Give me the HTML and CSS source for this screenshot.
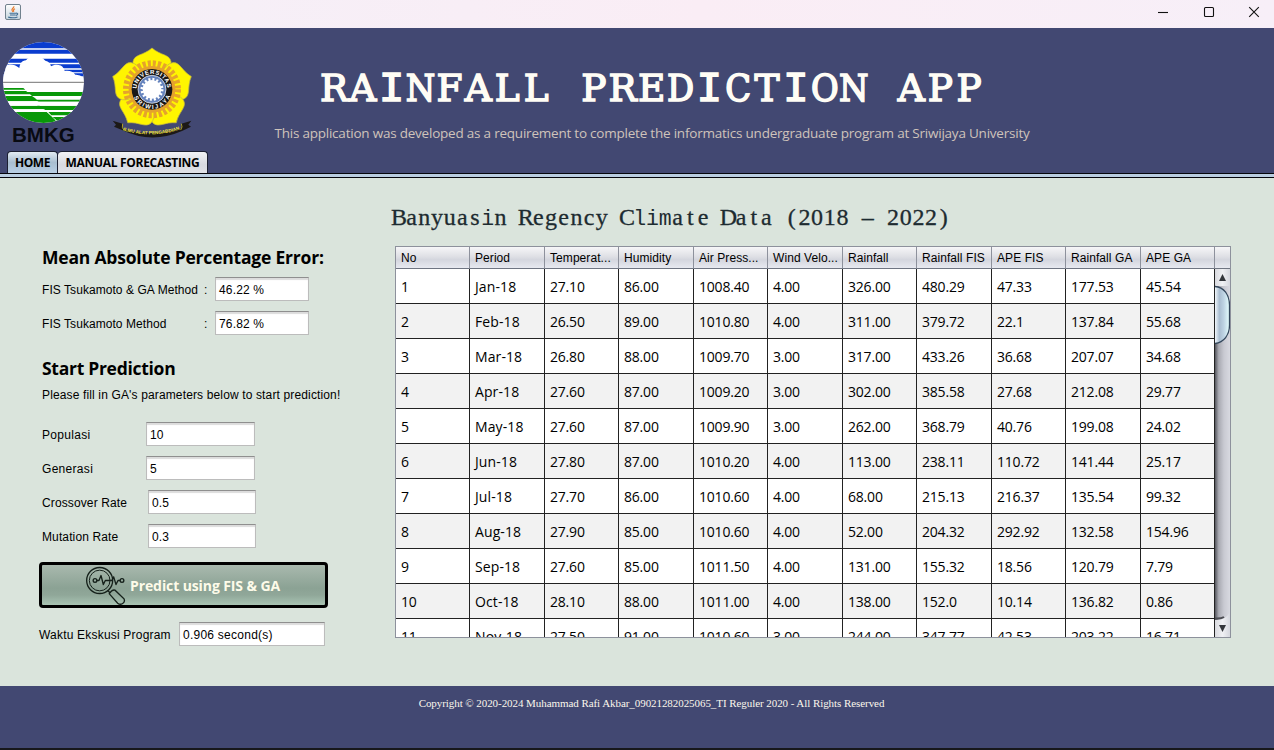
FILE: index.html
```html
<!DOCTYPE html>
<html lang="en">
<head>
<meta charset="utf-8">
<title>Rainfall Prediction App</title>
<link rel="stylesheet" href="styles.css">
</head>
<body>
<div class="window">
  <div class="titlebar">
    <svg class="java" viewBox="0 0 16 16">
      <defs><linearGradient id="jv" x1="0" y1="0" x2="0" y2="1"><stop offset="0" stop-color="#fff"/><stop offset="1" stop-color="#c3d3dd"/></linearGradient></defs>
      <rect x=".5" y=".5" width="15" height="15" rx="1.5" fill="url(#jv)" stroke="#71818e"/>
      <path d="M8.8 2.3c.6 1.7-2.800 2.300-1.700 4.200l1 1.500M10 4.800C8.200 5.600 8.200 6.300 8.900 7.600" fill="none" stroke="#e8792b" stroke-width="1.200"/>
      <path d="M4.500 9.200h6.500M5 11h5.500M3.200 13.100c3 .9 7 .7 9.300-.2M11 9.200c2.500-.3 2.200 1.800-.2 2.200" fill="none" stroke="#3f6d93" stroke-width="1.100"/>
    </svg>
    <div class="controls">
      <svg viewBox="0 0 12 12"><path d="M1 6.500h10" /></svg>
      <svg viewBox="0 0 12 12"><rect x="1.500" y="1.500" width="9" height="9" rx="1"/></svg>
      <svg viewBox="0 0 12 12"><path d="M1.200 1.200l9.600 9.600M10.800 1.200L1.200 10.800"/></svg>
    </div>
  </div>

  <header class="header">
    <svg class="logos" viewBox="0 84 660 366">
      <defs>
        <clipPath id="globe"><circle cx="130.500" cy="247.500" r="121.500"/></clipPath>
        <path id="petal" d="M456 268C425 235 395 207 399 185C403 162 430 167 456 144C482 167 509 162 513 185C517 207 487 235 456 268Z"/>
        <path id="arcTop" d="M410 268a46 46 0 0 1 92 0"/>
        <path id="arcBottom" d="M397 268a59 59 0 0 0 118 0"/>
        <path id="ribbonArc" d="M366 390Q456 418 546 386"/>
      </defs>
      <g clip-path="url(#globe)">
        <rect x="8" y="125" width="246" height="246" fill="#fff"/>
        <path d="M0 125h260v20H0zM0 149h260v12H0zM0 176h260v12H0zM0 193h260v12H0zM0 209h260v8H0zM0 220h260v9H0z" fill="#0a3ccf"/>
        <path d="M0 206c8-8 16-12 26-12c12-1 22 2 32 10c2-14 8-22 20-23c12-16 44-17 58 1c10 2 15 8 17 17c10-8 32-6 37 5q4 3 4 9c12-3 26 2 32 11q14-1 24 9v12H0z" fill="#fff"/>
        <path d="M0 247h260" stroke="#8e8e8e" stroke-width="4"/>
        <path d="M0 264h70l6 5H0zM0 273h78l14 10H0zM0 288h96l12 8H106l14 8H0zM0 317h124l12 11H0zM0 336h140l22 20l12 15H0zM82 276h178v12H96zM104 299h156v6H116zM112 317h148v5H120zM124 321h136v9H132zM145 336h115v10H154zM158 351h102v20h-78z" fill="#089808"/>
        <path d="M0 304h112v13H0zM108 305h152v12H120zM0 328h134v8H0zM140 330h120v6H147z" fill="#fff"/>
      </g>
      <text x="36" y="425" textLength="188" lengthAdjust="spacingAndGlyphs" class="bmkg">BMKG</text>
      <g fill="#fff500" stroke="#c3b640" stroke-width="2">
        <use href="#petal"/><use href="#petal" transform="rotate(72 456 268)"/><use href="#petal" transform="rotate(144 456 268)"/><use href="#petal" transform="rotate(216 456 268)"/><use href="#petal" transform="rotate(288 456 268)"/>
      </g>
      <circle cx="456" cy="268" r="70" fill="#e5a32c"/>
      <circle cx="456" cy="268" r="75" fill="none" stroke="#e5a32c" stroke-width="24" stroke-dasharray="9 5.727"/>
      <circle cx="456" cy="268" r="61" fill="#191717"/>
      <circle cx="456" cy="268" r="42" fill="#6583bd" stroke="#fff" stroke-width="2"/>
      <circle cx="456" cy="268" r="28" fill="#fff"/>
      <circle cx="456" cy="268" r="30" fill="none" stroke="#fff" stroke-width="9" stroke-dasharray="6 5.800"/>
      <text class="seal"><textPath href="#arcTop" startOffset="2" textLength="138">UNIVERSITAS</textPath></text>
      <text class="seal"><textPath href="#arcBottom" startOffset="24" textLength="140">SRIWIJAYA</textPath></text>
      <path d="M338 362l30 9v15q88 28 176-1v-14l30-9-9 12 8 6-27 13q-92 40-180-3l-24-10 6-6z" fill="#1c1917"/>
      <path d="M368 371q-4 12 4 20M544 371q5 10-2 19" fill="none" stroke="#f3df24" stroke-width="2"/>
      <text class="ribbon"><textPath href="#ribbonArc" startOffset="4" textLength="172">ILMU ALAT PENGABDIAN</textPath></text>
    </svg>
    <div class="heading">
      <svg class="title" viewBox="0 0 668 44"><text y="34.500" x="16 44.900 73.700 102.600 131.500 160.400 189.200 218.100 247 275.800 304.700 333.600 362.400 391.300 420.200 449.100 477.900 506.800 535.700 564.500 593.400 622.300 651.100">RA<tspan class="slab">I</tspan><tspan class="tight">N</tspan>FALL PRE<tspan class="tight">D</tspan><tspan class="slab">I</tspan><tspan class="tight">C</tspan>T<tspan class="slab">I</tspan><tspan class="tight">ON</tspan> APP</text></svg>
      <p class="subtitle">This application was developed as a requirement to complete the informatics undergraduate program at Sriwijaya University</p>
    </div>
    <nav class="tabs">
      <a class="tab active"><span>HOME</span></a>
      <a class="tab"><span>MANUAL FORECASTING</span></a>
    </nav>
  </header>
  <div class="tabline"></div>

  <main class="main">
    <section class="side">
      <h2>Mean Absolute Percentage Error:</h2>
      <div class="row mape"><label>FIS Tsukamoto &amp; GA Method</label><span>:</span><div class="field">46.22 %</div></div>
      <div class="row mape"><label>FIS Tsukamoto Method</label><span>:</span><div class="field">76.82 %</div></div>
      <h2 class="start">Start Prediction</h2>
      <p class="hint">Please fill in GA's parameters below to start prediction!</p>
      <div class="row param"><label>Populasi</label><div class="field">10</div></div>
      <div class="row param"><label>Generasi</label><div class="field">5</div></div>
      <div class="row param rate"><label>Crossover Rate</label><div class="field">0.5</div></div>
      <div class="row param rate"><label>Mutation Rate</label><div class="field">0.3</div></div>
      <button class="predict">
        <svg viewBox="0 0 120 116">
          <g fill="none" stroke="#15201a" stroke-width="4">
            <circle cx="41" cy="43" r="39"/><circle cx="41" cy="43" r="31" stroke-width="3"/>
            <circle cx="27" cy="43" r="5.500"/><path d="M33 43h6l6-15 7 27 6-12h20l5-11 7 23 6-12h6" stroke-linejoin="round"/><circle cx="108" cy="43" r="5.500"/>
            <path d="M66 74l5 5M70 82q9-13 17-10l27 26q4 9-4 14-8 5-15-1L70 83z"/>
          </g>
        </svg>
        <span>Predict using FIS &amp; GA</span>
      </button>
      <div class="row time"><label>Waktu Ekskusi Program</label><div class="field">0.906 second(s)</div></div>
    </section>

    <section class="data">
      <svg class="datatitle" viewBox="0 0 560 34"><text y="24" x="6 18.700 31.300 44 56.700 69.400 82 94.700 107.400 120 132.700 145.400 158 170.700 183.400 196.100 208.700 221.400 234.100 246.700 259.400 272.100 284.700 297.400 310.100 322.800 335.400 348.100 360.800 373.400 386.100 398.800 411.400 424.100 436.800 449.500 462.100 474.800 487.500 500.100 512.800 525.500 538.100 550.800">Banyuas<tspan class="narrow">i</tspan>n Regency C<tspan class="narrow">lim</tspan>ate Data (2018 – 2022)</text></svg>
      <div class="grid">
        <table>
          <colgroup><col class="a"><col class="b"><col class="a"><col class="b"><col class="a"><col class="b"><col class="a"><col class="b"><col class="a"><col class="b"><col class="a"></colgroup>
          <thead><tr><th>No</th><th>Period</th><th>Temperat...</th><th>Humidity</th><th>Air Press...</th><th>Wind Velo...</th><th>Rainfall</th><th>Rainfall FIS</th><th>APE FIS</th><th>Rainfall GA</th><th>APE GA</th></tr></thead>
          <tbody>
            <tr><td>1</td><td>Jan-18</td><td>27.10</td><td>86.00</td><td>1008.40</td><td>4.00</td><td>326.00</td><td>480.29</td><td>47.33</td><td>177.53</td><td>45.54</td></tr>
            <tr><td>2</td><td>Feb-18</td><td>26.50</td><td>89.00</td><td>1010.80</td><td>4.00</td><td>311.00</td><td>379.72</td><td>22.1</td><td>137.84</td><td>55.68</td></tr>
            <tr><td>3</td><td>Mar-18</td><td>26.80</td><td>88.00</td><td>1009.70</td><td>3.00</td><td>317.00</td><td>433.26</td><td>36.68</td><td>207.07</td><td>34.68</td></tr>
            <tr><td>4</td><td>Apr-18</td><td>27.60</td><td>87.00</td><td>1009.20</td><td>3.00</td><td>302.00</td><td>385.58</td><td>27.68</td><td>212.08</td><td>29.77</td></tr>
            <tr><td>5</td><td>May-18</td><td>27.60</td><td>87.00</td><td>1009.90</td><td>3.00</td><td>262.00</td><td>368.79</td><td>40.76</td><td>199.08</td><td>24.02</td></tr>
            <tr><td>6</td><td>Jun-18</td><td>27.80</td><td>87.00</td><td>1010.20</td><td>4.00</td><td>113.00</td><td>238.11</td><td>110.72</td><td>141.44</td><td>25.17</td></tr>
            <tr><td>7</td><td>Jul-18</td><td>27.70</td><td>86.00</td><td>1010.60</td><td>4.00</td><td>68.00</td><td>215.13</td><td>216.37</td><td>135.54</td><td>99.32</td></tr>
            <tr><td>8</td><td>Aug-18</td><td>27.90</td><td>85.00</td><td>1010.60</td><td>4.00</td><td>52.00</td><td>204.32</td><td>292.92</td><td>132.58</td><td>154.96</td></tr>
            <tr><td>9</td><td>Sep-18</td><td>27.60</td><td>85.00</td><td>1011.50</td><td>4.00</td><td>131.00</td><td>155.32</td><td>18.56</td><td>120.79</td><td>7.79</td></tr>
            <tr><td>10</td><td>Oct-18</td><td>28.10</td><td>88.00</td><td>1011.00</td><td>4.00</td><td>138.00</td><td>152.0</td><td>10.14</td><td>136.82</td><td>0.86</td></tr>
            <tr><td>11</td><td>Nov-18</td><td>27.50</td><td>91.00</td><td>1010.60</td><td>3.00</td><td>244.00</td><td>347.77</td><td>42.53</td><td>203.22</td><td>16.71</td></tr>
          </tbody>
        </table>
        <div class="scroll">
          <div class="corner"></div>
          <svg viewBox="0 0 15 368">
            <defs>
              <linearGradient id="track"><stop offset="0" stop-color="#55565d"/><stop offset=".25" stop-color="#a9aab2"/><stop offset=".6" stop-color="#c9cad2"/><stop offset="1" stop-color="#d8d9e0"/></linearGradient>
              <linearGradient id="thumb"><stop offset="0" stop-color="#f2f7fb"/><stop offset=".3" stop-color="#a9bdd0"/><stop offset=".6" stop-color="#bed3e3"/><stop offset="1" stop-color="#e6ffff"/></linearGradient>
              <linearGradient id="btn"><stop offset="0" stop-color="#d9dadf"/><stop offset=".5" stop-color="#f0f1f4"/><stop offset="1" stop-color="#d5d7de"/></linearGradient>
            </defs>
            <rect width="15" height="368" fill="url(#track)"/>
            <rect width="15" height="17" fill="url(#btn)"/>
            <path d="M7.500 5l3.500 7H4z" fill="#33363b"/>
            <path d="M0 17.500C9 18 14.500 26 14.500 36v20C14.500 66 9 73.500 0 74.500z" fill="url(#thumb)"/>
            <path d="M0 17.500C9 18 14.500 26 14.500 36v20C14.500 66 9 73.500 0 74.500" fill="none" stroke="#33475c" stroke-width="1.300"/>
            <path d="M0 351q10 1 15-8v25H0z" fill="url(#btn)"/><path d="M0 349.500q6 .5 9-1.500" fill="none" stroke="#4b4c52" stroke-width="2"/>
            <path d="M7.500 363L4 356h7z" fill="#33363b"/>
          </svg>
        </div>
      </div>
    </section>
  </main>

  <footer class="footer"><span>Copyright © 2020-2024 Muhammad Rafi Akbar_09021282025065_TI Reguler 2020 - All Rights Reserved</span></footer>
</div>
</body>
</html>
```
FILE: styles.css
```css
* { box-sizing: border-box; }
body { margin: 0; font: 12px "Liberation Sans", Arial, sans-serif; color: #000; }
h2, p { margin: 0; }
svg { display: block; }
.window { width: 1274px; height: 750px; display: flex; flex-direction: column; overflow: hidden; background: #dae4dc; }

.titlebar { height: 28px; flex: none; display: flex; justify-content: space-between; padding: 4px 14px 0 5px; background: linear-gradient(90deg, #f4f0f8, #faedf5 55%, #f7eff8); }
.java { width: 16px; height: 16px; }
.controls { display: flex; gap: 33.500px; padding-top: 2px; }
.controls svg { width: 12px; height: 12px; fill: none; stroke: #111; stroke-width: 1.100; }

.header { height: 145px; flex: none; display: grid; grid-template: 122px 23px / 220px 864px; background: #424872; }
.logos { width: 220px; height: 122px; }
.bmkg { font: bold 62px "Liberation Sans", sans-serif; fill: #080a12; }
.seal { font: bold 18px "Liberation Sans", sans-serif; fill: #fff; }
.ribbon { font: bold 14px "Liberation Sans", sans-serif; fill: #f6e338; }
.heading { display: flex; flex-direction: column; align-items: center; padding-top: 38px; }
.title { width: 668px; height: 44px; overflow: visible; }
.title text { font: 37.500px "DejaVu Serif", serif; text-anchor: middle; fill: #fffdf5; stroke: #fffdf5; stroke-width: 1.500; }
.title .tight { font-family: "DejaVu Serif Condensed", "DejaVu Serif", serif; font-stretch: condensed; }
.title .slab { font: 42px "Liberation Mono", monospace; stroke-width: 1.700; }
.subtitle { margin-top: 13px; font: 13.500px/20px "Open Sans", sans-serif; letter-spacing: -.22px; color: #cfc3bb; white-space: nowrap; }
.tabs { grid-column: 1 / -1; display: flex; align-items: flex-end; padding-left: 7px; height: 23px; }
.tab { height: 22px; width: 150px; padding-bottom: 1px; display: flex; align-items: center; justify-content: center; border: 1px solid #1c2032; border-bottom: 0; border-left: 0; border-radius: 4px 4px 0 0; background: linear-gradient(#f2f3f5, #d8dae1 60%, #e0e2e8); font: bold 12px "Open Sans", sans-serif; letter-spacing: -.3px; white-space: nowrap; }
.tab.active { width: 51px; border-left: 1px solid #1c2032; background: linear-gradient(#e2ebf2, #a9bed0 50%, #b8cfe5); letter-spacing: -.4px; }
.tabline { height: 5px; flex: none; border: solid #05060c; border-width: 1px 0; background: #b9cde0; }

.main { flex: 1; display: grid; grid-template-columns: 393px 1fr; min-height: 0; }
.side { padding: 67px 0 0 42px; }
h2 { font: bold 17.500px/24px "Open Sans", sans-serif; letter-spacing: -.2px; white-space: nowrap; }
.row { display: flex; align-items: center; height: 24px; margin-bottom: 10px; }
.row label { padding-top: 1px; letter-spacing: .1px; white-space: nowrap; }
.field { height: 24px; padding: 0 3px; line-height: 24px; letter-spacing: .15px; background: #fff; border: 1px solid #bcbcbc; border-top-color: #8f8f8f; box-shadow: inset 0 2px 1px #dcdcdc; white-space: nowrap; }
.side h2 { margin-bottom: 8px; }
.mape label { width: 162px; letter-spacing: .06px; }
.mape span { width: 11px; padding-top: 1px; }
.mape .field { width: 94px; }
.side .start { margin: 21px 0 8px; letter-spacing: -.28px; }
.hint { line-height: 14px; letter-spacing: .14px; margin-bottom: 20px; white-space: nowrap; }
.param label { width: 104px; letter-spacing: .3px; }
.param .field { width: 109px; }
.rate label { width: 106px; letter-spacing: .12px; }
.rate .field { width: 108px; }
.predict { display: flex; align-items: center; gap: 4px; width: 289px; height: 46px; margin: 14px 0 14px -3px; padding: 0 0 0 44px; border: 3px solid #000; border-radius: 4px; background: linear-gradient(#a9b9ae, #8ba294 58%, #90a799 75%, #a9c4b3); color: #fdfbe9; font: bold 14px "Open Sans", sans-serif; letter-spacing: -.1px; white-space: nowrap; }
.predict svg { width: 40px; height: 39px; }
.time { margin-left: -3px; }
.time label { width: 140px; letter-spacing: .2px; }
.time .field { width: 146px; letter-spacing: .25px; }

.data { padding-top: 23px; }
.datatitle { width: 560px; height: 34px; overflow: visible; }
.datatitle text { font: 24px "Liberation Serif", serif; text-anchor: middle; fill: #1d2b30; stroke: #1d2b30; stroke-width: .3; }
.datatitle .narrow { font: 21.500px "Liberation Mono", monospace; stroke-width: 0; }
.grid { display: flex; width: 836px; height: 392px; margin: 11px 0 0 2px; border: 1px solid #8d919c; overflow: hidden; background: #fff; }
table { width: 819px; flex: none; table-layout: fixed; border-collapse: separate; border-spacing: 0; align-self: flex-start; }
.a { width: 74px; }
.b { width: 75px; }
th { height: 22px; padding: 0 0 0 5px; text-align: left; font-weight: normal; font-size: 12px; letter-spacing: .07px; white-space: nowrap; border-right: 1px solid #8d919c; border-bottom: 1px solid #6f7582; background: linear-gradient(#f6f6f8, #dfe0e5 45%, #d4d6de 60%, #e7e9f0); }
td { height: 35px; padding: 1px 0 0 5px; font: 14px "Open Sans", sans-serif; letter-spacing: -.2px; border-right: 1px solid #222; border-bottom: 1px solid #222; }
td:nth-child(2) { letter-spacing: .1px; }
tbody tr:nth-child(even) { background: #f2f2f2; }
.scroll { width: 15px; flex: none; }
.corner { height: 22px; border-bottom: 1px solid #6f7582; background: linear-gradient(#f6f6f8, #dfe0e5 45%, #d4d6de 60%, #e7e9f0); }
.scroll svg { width: 15px; height: 368px; }

.footer { height: 64px; flex: none; display: flex; justify-content: center; padding: 10px 0 0 29px; background: #424872; border-bottom: 2px solid #17181c; color: #fbf7ec; font: 11px/15px "Liberation Serif", serif; letter-spacing: -.065px; white-space: nowrap; }
```
